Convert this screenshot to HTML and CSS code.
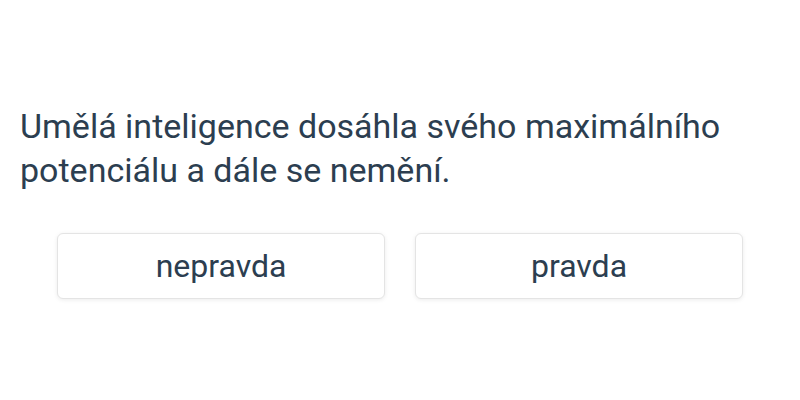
FILE: index.html
```html
<!DOCTYPE html>
<html lang="cs">
<head>
<meta charset="utf-8">
<link rel="stylesheet" href="styles.css">
</head>
<body>
<main class="quiz">
  <p class="question">Umělá inteligence dosáhla svého maximálního potenciálu a dále se nemění.</p>
  <div class="answers">
    <button class="answer">nepravda</button>
    <button class="answer">pravda</button>
  </div>
</main>
</body>
</html>
```
FILE: styles.css
```css
html, body {
  margin: 0;
  padding: 0;
  background: #ffffff;
}
.quiz {
  width: 800px;
  height: 400px;
  box-sizing: border-box;
  padding: 104px 20px 0 20px;
  font-family: Roboto, "Noto Sans", sans-serif;
  color: #2c3e50;
}
.question {
  margin: 0;
  font-size: 34px;
  line-height: 44px;
  max-width: 760px;
}
.answers {
  display: flex;
  justify-content: center;
  gap: 30px;
  margin-top: 41px;
}
.answer {
  width: 328px;
  height: 66px;
  background: #ffffff;
  border: 1px solid #e4e4e4;
  border-radius: 6px;
  box-shadow: 0 1px 4px rgba(0, 0, 0, 0.08);
  font-family: Roboto, "Noto Sans", sans-serif;
  font-size: 32px;
  color: #2c3e50;
  padding: 0;
}
```
